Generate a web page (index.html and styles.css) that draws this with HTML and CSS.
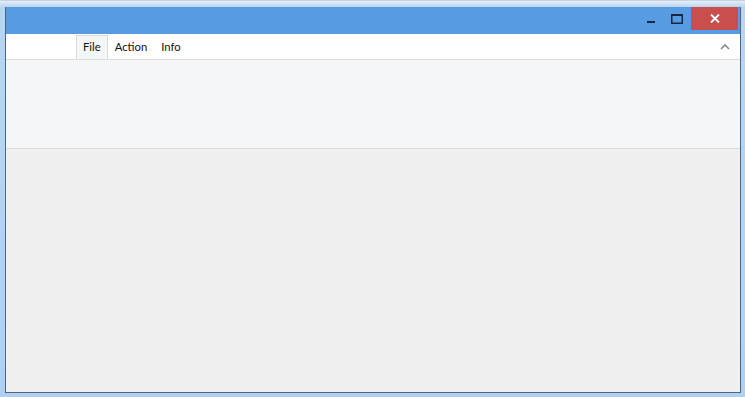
FILE: index.html
```html
<!DOCTYPE html>
<html>
<head>
<meta charset="utf-8">
<link rel="stylesheet" href="styles.css">
</head>
<body>
<div class="frame">
  <div class="window">
    <div class="titlebar">
      <div class="spacer"></div>
      <div class="tbtn min"><svg width="10" height="4" viewBox="0 0 10 4"><rect x="1" y="1" width="8" height="2" fill="#19263b"/></svg></div>
      <div class="tbtn max"><svg width="12" height="10" viewBox="0 0 12 10"><rect x="0.75" y="0.75" width="10.5" height="8.5" fill="none" stroke="#19263b" stroke-width="1.5"/><rect x="0" y="0" width="12" height="2" fill="#19263b"/></svg></div>
      <div class="tbtn close"><svg width="10" height="9" viewBox="0 0 10 9"><path d="M1 0.5 L9 8.5 M9 0.5 L1 8.5" stroke="#fff" stroke-width="1.8"/></svg></div>
    </div>
    <div class="menubar">
      <div class="tabs">
        <span class="tab active">File</span>
        <span class="tab">Action</span>
        <span class="tab">Info</span>
      </div>
      <svg class="chev" width="10" height="7" viewBox="0 0 10 7"><path d="M1 6 L5 2 L9 6" fill="none" stroke="#8a8a8a" stroke-width="1.6"/></svg>
    </div>
    <div class="ribbon"></div>
    <div class="content"></div>
  </div>
</div>
</body>
</html>
```
FILE: styles.css
```css
html, body {
  margin: 0;
  padding: 0;
}
body {
  width: 745px;
  height: 397px;
  overflow: hidden;
  font-family: "Noto Sans", "Open Sans", sans-serif;
}
.frame {
  box-sizing: border-box;
  width: 745px;
  height: 397px;
  padding: 6px 4px 4px 5px;
  background: linear-gradient(to bottom, #e6eef6 0px, #b7d6f3 6px, #aed1f3 100%);
  border-top: 1px solid #c8d3de;
}
.window {
  box-sizing: border-box;
  height: 100%;
  display: flex;
  flex-direction: column;
  border: 1px solid #4f6682;
  border-top: none;
  background: #f0f0f0;
}
.titlebar {
  height: 27px;
  background: #579be2;
  display: flex;
  align-items: flex-start;
  padding-right: 1px;
}
.spacer { flex: 1; }
.tbtn {
  height: 23px;
  display: flex;
  align-items: center;
  justify-content: center;
}
.min { width: 26px; padding-top: 6px; box-sizing: border-box; }
.max { width: 26px; }
.close {
  width: 47px;
  background: #c94f4f;
  margin-left: 1px;
  margin-right: 1px;
}
.menubar {
  height: 25px;
  background: #ffffff;
  display: flex;
  align-items: stretch;
  justify-content: space-between;
  padding-left: 70px;
  padding-right: 10px;
}
.tabs {
  display: flex;
  align-items: stretch;
  padding-top: 1px;
  gap: 0;
}
.tab {
  font-family: "Lato", "Noto Sans", sans-serif;
  font-size: 11.3px;
  line-height: 15px;
  color: #111111;
  padding: 3px 6px 0 6px;
  border: 1px solid transparent;
  border-bottom: none;
}
.tab.active {
  background: #f5f6f7;
  border-color: #dadbdc;
}
.chev {
  align-self: center;
  margin-top: -1px;
}
.ribbon {
  height: 88px;
  background: #f5f6f7;
  border-top: 1px solid #dadbdc;
  border-bottom: 1px solid #dadbdc;
}
.content {
  flex: 1;
  background: #f0f0f0;
}
```
